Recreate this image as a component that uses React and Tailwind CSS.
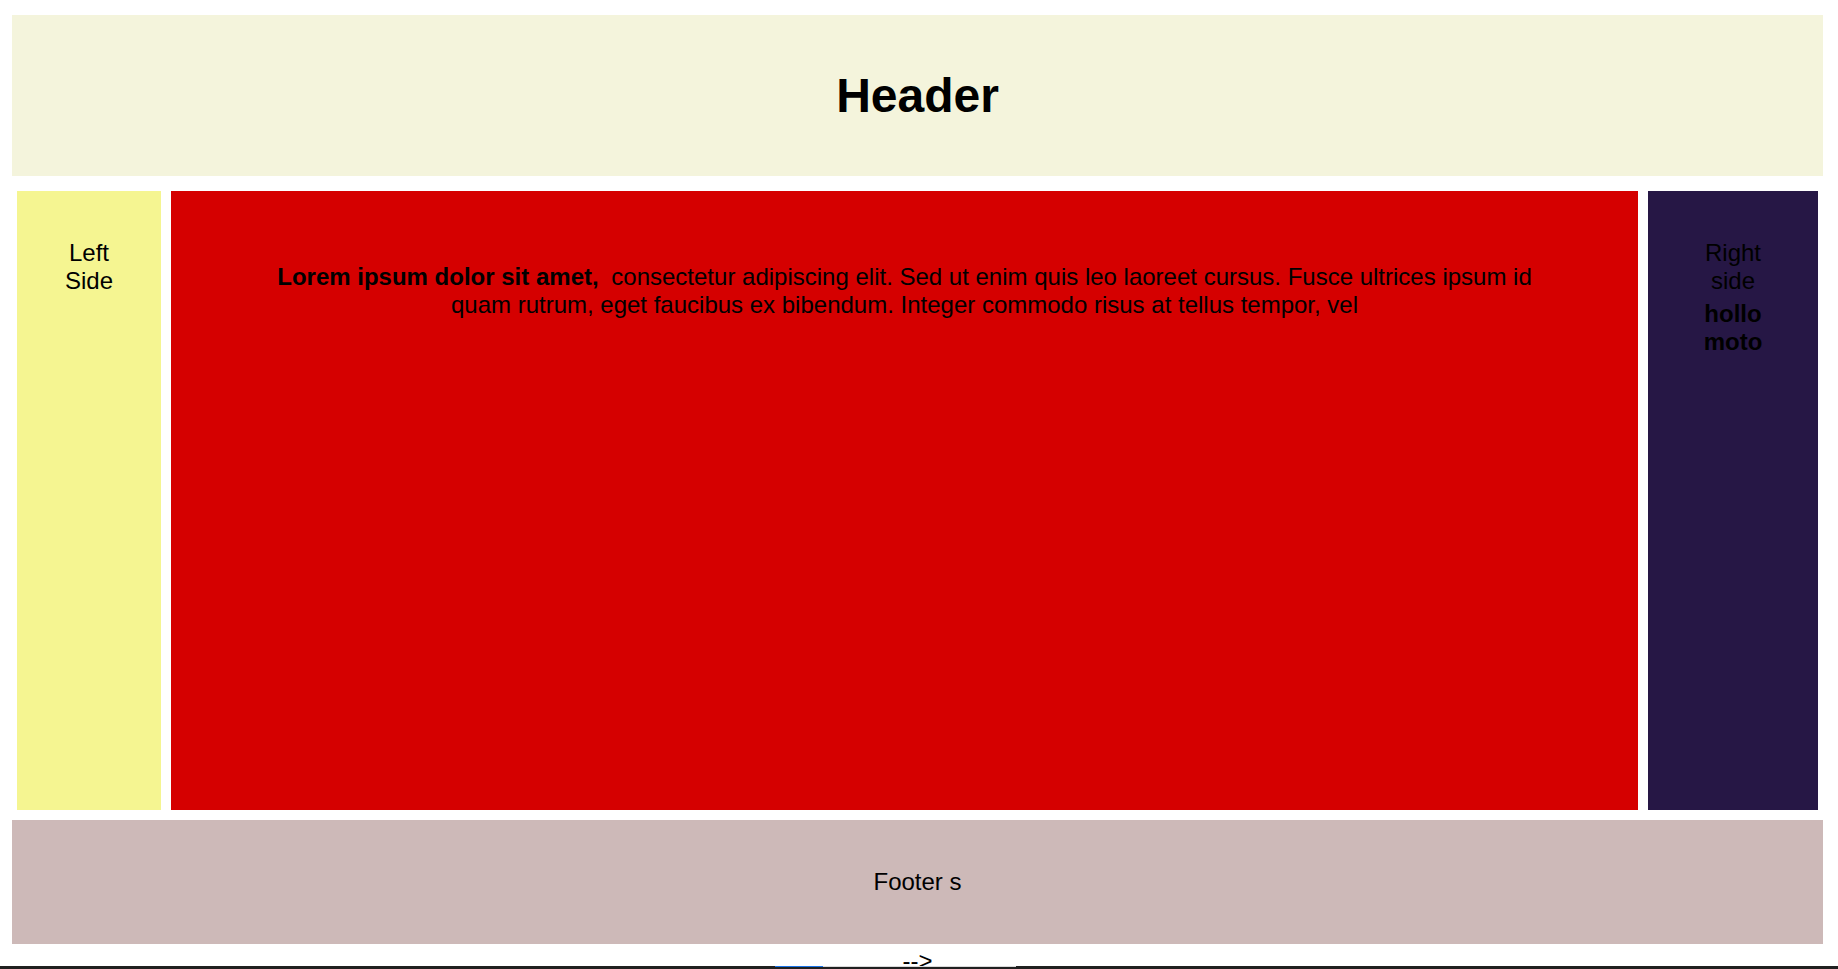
export default function App() {
  return (
    <div className="min-h-screen bg-white font-['Liberation_Sans',Arial,sans-serif] text-[24px] leading-[28px] text-black">
      <div className="pl-[12px] pr-[15px] pt-[15px]">
        <header className="h-[161px] bg-[#f4f4dc] flex items-center justify-center">
          <h1 className="text-[48px] font-bold">Header</h1>
        </header>

        <div className="mt-[15px] mx-[5px] h-[619px] flex gap-[10px]">
          <aside className="w-[144px] shrink-0 bg-[#f5f591] px-[30px] pt-[48px] text-center">
            Left Side
          </aside>

          <main className="flex-1 bg-[#d50000] px-[86px] pt-[72px] text-center">
            <p>
              <b className="mr-[6px]">Lorem ipsum dolor sit amet,</b> consectetur adipiscing elit. Sed ut enim quis leo laoreet cursus. Fusce ultrices ipsum id quam rutrum, eget faucibus ex bibendum. Integer commodo risus at tellus tempor, vel
            </p>
          </main>

          <aside className="w-[170px] shrink-0 bg-[#261745] px-[42px] pt-[48px] text-center">
            <p>Right side</p>
            <p className="mt-[5px] font-bold">hollo moto</p>
          </aside>
        </div>

        <footer className="mt-[10px] h-[124px] bg-[#cdb9b8] flex items-center justify-center">
          Footer s
        </footer>

        <div className="mt-[3px] text-center">--&gt;</div>
      </div>

      {/* strip of the panel docked at the bottom */}
      <div className="fixed bottom-0 left-0 right-0 h-[3px] bg-[#202020]">
        <div className="absolute top-0 left-[775px] w-[48px] h-[1px] bg-[#1a73e8]" />
        <div className="absolute top-0 left-[823px] w-[193px] h-[1px] bg-[#d9d9d9]" />
      </div>
    </div>
  );
}
